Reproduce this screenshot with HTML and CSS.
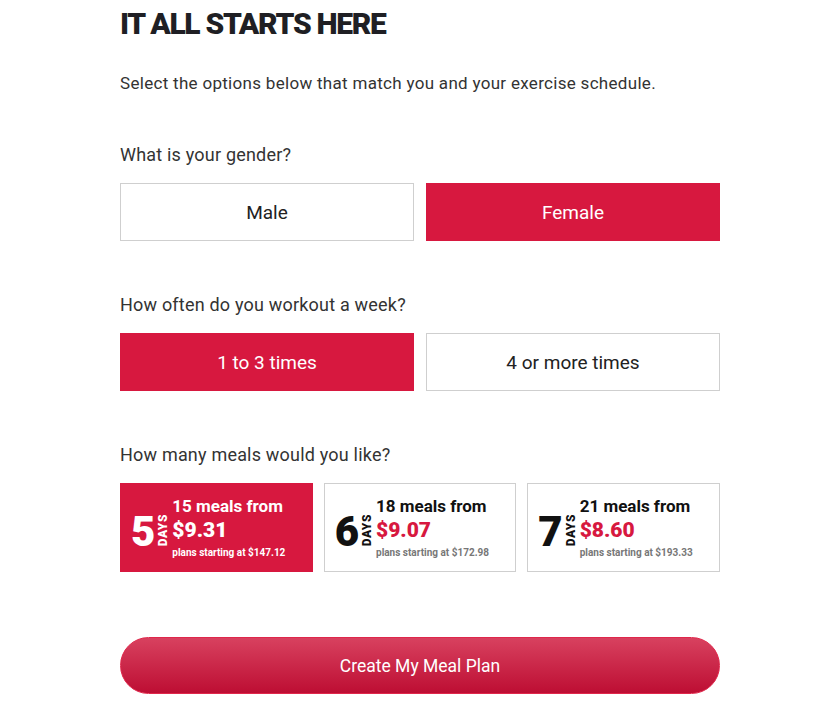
FILE: index.html
```html
<!DOCTYPE html>
<html lang="en">
<head>
<meta charset="utf-8">
<title>It all starts here</title>
<link rel="stylesheet" href="styles.css">
</head>
<body>
<main class="planner">
  <h1 class="title">IT ALL STARTS HERE</h1>
  <p class="intro">Select the options below that match you and your exercise schedule.</p>

  <section class="group group-first">
    <p class="question">What is your gender?</p>
    <div class="choices">
      <button class="choice">Male</button>
      <button class="choice is-active">Female</button>
    </div>
  </section>

  <section class="group">
    <p class="question">How often do you workout a week?</p>
    <div class="choices">
      <button class="choice is-active">1 to 3 times</button>
      <button class="choice">4 or more times</button>
    </div>
  </section>

  <section class="group">
    <p class="question">How many meals would you like?</p>
    <div class="meals">
      <div class="meal is-active">
        <span class="meal-days">5</span>
        <span class="meal-label">DAYS</span>
        <div class="meal-info">
          <span class="meal-count">15 meals from</span>
          <span class="meal-price">$9.31</span>
          <span class="meal-plan">plans starting at $147.12</span>
        </div>
      </div>
      <div class="meal">
        <span class="meal-days">6</span>
        <span class="meal-label">DAYS</span>
        <div class="meal-info">
          <span class="meal-count">18 meals from</span>
          <span class="meal-price">$9.07</span>
          <span class="meal-plan">plans starting at $172.98</span>
        </div>
      </div>
      <div class="meal">
        <span class="meal-days">7</span>
        <span class="meal-label">DAYS</span>
        <div class="meal-info">
          <span class="meal-count">21 meals from</span>
          <span class="meal-price">$8.60</span>
          <span class="meal-plan">plans starting at $193.33</span>
        </div>
      </div>
    </div>
  </section>

  <button class="cta">Create My Meal Plan</button>
</main>
</body>
</html>
```

FILE: styles.css
```css
* { box-sizing: border-box; }

html, body {
  margin: 0;
  padding: 0;
  background: #fff;
}

body {
  font-family: Roboto, "Liberation Sans", Arial, sans-serif;
  color: #2b2b2b;
}

.planner {
  width: 600px;
  margin-left: 120px;
  padding-top: 6px;
}

.title {
  margin: 0;
  font-size: 30px;
  line-height: 36px;
  font-weight: 900;
  letter-spacing: -1.3px;
  color: #1f1f24;
}

.intro {
  margin: 31px 0 0;
  font-size: 17px;
  line-height: 20px;
  letter-spacing: 0.3px;
  color: #333;
}

.group {
  margin-top: 54px;
}

.group-first {
  margin-top: 52px;
}

.question {
  margin: 0;
  font-size: 18px;
  line-height: 20px;
  letter-spacing: 0.2px;
  color: #333;
}

.choices {
  margin-top: 18px;
  display: grid;
  grid-template-columns: 1fr 1fr;
  gap: 12px;
}

.choice {
  height: 58px;
  border: 1px solid #cfcfcf;
  background: #fff;
  font-family: inherit;
  font-size: 19px;
  color: #222;
  padding: 0;
}

.choice.is-active {
  background: #d7183f;
  border-color: #d7183f;
  color: #fff;
}

.meals {
  margin-top: 18px;
  display: grid;
  grid-template-columns: repeat(3, 1fr);
  gap: 11px;
}

.meal {
  height: 89px;
  border: 1px solid #cfcfcf;
  display: flex;
  align-items: center;
  padding-left: 10px;
  color: #111;
}

.meal.is-active {
  background: #d7183f;
  border-color: #d7183f;
  color: #fff;
}

.meal-days {
  font-size: 42px;
  line-height: 1;
  font-weight: 900;
  letter-spacing: -1px;
  margin-top: 8px;
}

.meal-label {
  writing-mode: vertical-rl;
  transform: rotate(180deg);
  font-size: 12px;
  font-weight: 900;
  line-height: 10px;
  letter-spacing: 0.6px;
  margin: 6px 4px 0 4px;
}

.meal-info {
  display: flex;
  flex-direction: column;
  margin-top: 0;
}

.meal-count {
  font-size: 17px;
  font-weight: 700;
  line-height: 20px;
}

.meal-price {
  font-size: 21px;
  font-weight: 900;
  line-height: 28px;
  color: #d7183f;
}

.meal.is-active .meal-price {
  color: #fff;
}

.meal-plan {
  margin-top: 3px;
  font-size: 10px;
  font-weight: 700;
  line-height: 12px;
  color: #777;
}

.meal.is-active .meal-plan {
  color: #fff;
}

.cta {
  display: block;
  width: 600px;
  height: 57px;
  margin-top: 65px;
  border: 1px solid #e0274b;
  border-radius: 29px;
  background: linear-gradient(#d8415f, #bd0e33);
  color: #fff;
  font-family: inherit;
  font-size: 17.5px;
}
```
